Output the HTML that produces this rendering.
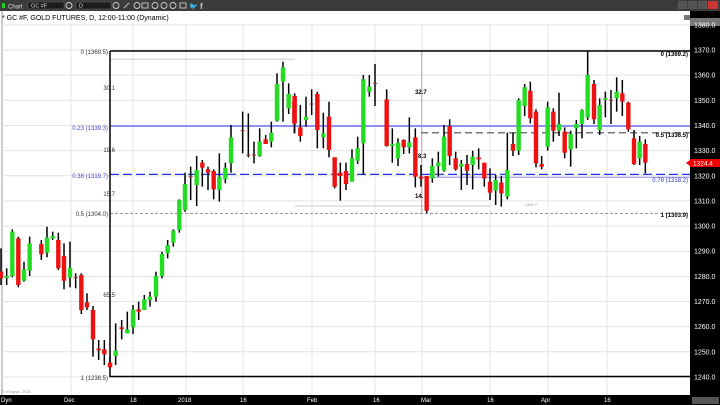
<!DOCTYPE html>
<html><head><meta charset="utf-8">
<style>
html,body{margin:0;padding:0;width:720px;height:405px;overflow:hidden;background:#fff;font-family:"Liberation Sans",sans-serif;}
#tb{position:absolute;left:0;top:0;width:720px;height:11px;background:#3a3a3a;}
svg{position:absolute;left:0;top:0;}
</style></head><body>
<svg id="s" width="720" height="405" viewBox="0 0 720 405" font-family="Liberation Sans, sans-serif">
<rect x="0" y="0" width="720" height="11" fill="#3b3b3b"/>
<rect x="2" y="3" width="3" height="5" fill="#2c2"/>
<text x="8" y="8.5" font-size="6" fill="#ddd">Chart</text>
<rect x="28" y="2" width="36" height="7" fill="#1c1c1c" stroke="#666" stroke-width="0.5"/>
<text x="31" y="7.5" font-size="5.5" fill="#ddd">GC #F</text>
<circle cx="69" cy="5.5" r="3" fill="none" stroke="#ccc"/>
<rect x="76" y="2" width="35" height="7" fill="#1c1c1c" stroke="#666" stroke-width="0.5"/>
<text x="79" y="7.5" font-size="5.5" fill="#ddd">D</text>
<g fill="none" stroke="#ccc" stroke-width="0.9">
<circle cx="116" cy="5.5" r="3"/><path d="M124 8 L129 3"/><circle cx="137" cy="5.5" r="3"/><rect x="142" y="3" width="6" height="5"/><circle cx="155" cy="5.5" r="3"/><circle cx="164" cy="5.5" r="3"/><circle cx="173" cy="5.5" r="3"/><rect x="180" y="3" width="6" height="5"/></g>
<text x="189" y="8.5" font-size="7" fill="#ccc">🐦</text><text x="200" y="9" font-size="8" font-weight="bold" fill="#ccc">f</text>
<rect x="678" y="1" width="9" height="8" fill="#555"/><rect x="688" y="1" width="9" height="8" fill="#555"/><rect x="698" y="1" width="9" height="8" fill="#555"/><rect x="708" y="1" width="10" height="8" fill="#c33"/>
<text x="2" y="20" font-size="7" fill="#000">* GC #F, GOLD FUTURES, D, 12:00-11:00 (Dynamic)</text>
<rect x="690" y="11" width="30" height="394" fill="#000"/>
<rect x="690" y="18" width="30" height="8" fill="#777"/>
<rect x="684" y="15" width="6" height="5" fill="#777"/>
<line x1="2" y1="11" x2="2" y2="395" stroke="#999"/>
<g id="grid" stroke="#e4e4e4" stroke-width="1"></g>
<g id="fib"></g>
<g id="c"></g>
<rect x="0" y="395" width="720" height="10" fill="#000"/>
<g font-size="6" fill="#fff">
<text x="1" y="402">Dyn</text><text x="64" y="402">Dec</text><text x="130" y="402">18</text><text x="178" y="402">2018</text><text x="240" y="402">16</text><text x="307" y="402">Feb</text><text x="373" y="402">16</text><text x="421" y="402">Mar</text><text x="487" y="402">16</text><text x="541" y="402">Apr</text><text x="604" y="402">16</text></g>
<rect x="692" y="397" width="27" height="7" fill="#555"/>
<text x="2" y="393" font-size="4" fill="#999">© eSignal, 2018</text>
</svg>
<script>
var s=document.getElementById('s'),NS='http://www.w3.org/2000/svg';
function el(p,t,a,txt){var e=document.createElementNS(NS,t);for(var k in a)e.setAttribute(k,a[k]);if(txt)e.textContent=txt;document.getElementById(p)?document.getElementById(p).appendChild(e):s.appendChild(e);return e;}
function Y(p){return 50+(1370-p)*2.515;}
// grid
[71,133,186,243,312,375,422,490,548,607].forEach(function(x){el('grid','line',{x1:x,y1:24,x2:x,y2:395});});
for(var p=1380;p>=1230;p-=10){var y=Y(p);el('grid','line',{x1:2,y1:y,x2:690,y2:y});
 el('fib','text',{x:694,y:y+2.5,'font-size':7,fill:'#fff'},p.toFixed(1));}
// fib lines
el('fib','line',{x1:110,y1:59.3,x2:295,y2:59.3,stroke:'#ccc'});
el('fib','line',{x1:295,y1:206,x2:490,y2:206,stroke:'#ccc'});
el('fib','line',{x1:421.7,y1:51,x2:421.7,y2:213,stroke:'#aaa'});
el('fib','line',{x1:110,y1:126,x2:690,y2:126,stroke:'#8f8ff5','stroke-width':2});
el('fib','line',{x1:110,y1:174.4,x2:690,y2:174.4,stroke:'#2233ee','stroke-width':1.3,'stroke-dasharray':'9,4'});
el('fib','line',{x1:421,y1:177.3,x2:690,y2:177.3,stroke:'#8f8ff5','stroke-width':1});
el('fib','line',{x1:110,y1:213.4,x2:690,y2:213.4,stroke:'#777','stroke-width':0.8,'stroke-dasharray':'3,2'});
el('fib','line',{x1:421,y1:132.7,x2:690,y2:132.7,stroke:'#777','stroke-width':1.5,'stroke-dasharray':'7,4'});
el('fib','path',{d:'M110 51 H690 M110 51 V376.5 H690',stroke:'#000','stroke-width':1.5,fill:'none'});
var L=[[108,54,'0 (1369.5)','#333','end'],[115,90,'30.1','#333','end'],[108,130,'0.23 (1339.3)','#44c','end'],[115,152,'19.6','#333','end'],[108,178,'0.38 (1319.7)','#44c','end'],[115,196,'15.7','#333','end'],[108,216,'0.5 (1304.0)','#333','end'],[115,297,'65.5','#333','end'],[108,380,'1 (1238.5)','#333','end'],
[415,94,'32.7','#000','start'],[418,158,'8.3','#000','start'],[415,198,'14.','#000','start'],[688,56,'0 (1369.2)','#000','end'],[688,137,'0.5 (1336.5)','#000','end'],[688,182,'0.78 (1318.2)','#33c','end'],[688,217,'1 (1303.9)','#000','end'],[537,206,'1306.7','#999','end']];
L.forEach(function(l){el('fib','text',{x:l[0],y:l[1],'font-size':l[2]=='1306.7'?4:6,fill:l[3],'text-anchor':l[4],'font-weight':l[3]=='#000'?'bold':'normal'},l[2]);});
// candles: [zx, type, bt, bb, wt, wb] in zoom coords
var z4=[[3,'r',695,715,625,735],[20,'g',708,714,685,735],[37,'g',575,708,568,712],[55,'r',595,735,590,742],[72,'g',688,722,665,725],[89,'g',610,692,590,708],[124,'r',612,643,600,660],[141,'g',593,638,560,652],[158,'g',588,595,575,600],[175,'r',600,685,578,690],[192,'r',648,722,610,748],[210,'g',683,713,605,742],[227,'d',713,714,700,745],[244,'r',705,810,700,822],[261,'r',787,802,760,810],[279,'r',810,898,798,950],[296,'r',926,931,900,960],[313,'r',928,943,900,975],[330,'r',968,982,950,985],[347,'g',932,948,850,975],[365,'r',862,867,840,898],[382,'g',868,880,815,880],[399,'g',808,862,795,882],[416,'r',808,815,785,840],[433,'g',778,810,765,805],[450,'g',770,780,755,800],[468,'g',708,770,695,785],[486,'g',642,708,635,715],[503,'g',615,640,600,655],[520,'g',572,608,568,620],[538,'g',480,570,478,578],[555,'g',432,510,398,515],[572,'d',410,411,380,480],[590,'g',390,435,348,498],[607,'r',368,383,360,440],[624,'r',388,398,380,450],[641,'r',393,448,388,478],[658,'g',410,450,340,485],[676,'g',383,418,368,430],[693,'g',292,370,255,398],[728,'d',272,273,215,340],[745,'d',345,346,220,352],[762,'d',345,346,305,370],[779,'g',305,348,265,350],[797,'r',298,312,285,312],[814,'g',278,305,245,322],[831,'g',132,242,100,245],[849,'g',82,125,65,245],[866,'g',162,205,130,222],[883,'r',185,250,185,280]];
var z5=[[14,'r',168,250,160,280],[31,'r',262,288,195,305],[48,'g',230,240,170,260],[65,'d',192,193,148,225],[82,'r',162,270,155,325],[100,'g',280,292,218,325],[117,'r',230,330,185,352],[134,'r',352,440,352,445],[151,'r',398,408,368,482],[168,'r',393,432,368,450],[186,'g',355,425,328,425],[203,'g',325,362,290,372],[220,'g',118,310,105,405],[238,'g',140,155,105,170],[255,'d',130,131,72,198],[290,'r',178,318,148,320],[307,'g',313,318,265,368],[324,'g',308,355,295,378],[341,'r',300,322,298,342],[358,'g',307,322,232,340],[376,'r',292,410,265,442],[393,'r',410,416,375,440],[410,'r',408,512,408,520],[427,'g',378,415,355,428],[445,'g',368,378,335,410],[462,'g',290,392,255,395],[479,'r',258,348,238,375],[497,'r',355,388,335,392],[514,'g',372,380,360,450],[531,'r',372,392,345,435],[548,'g',350,375,332,448],[566,'r',352,358,325,388],[583,'r',368,415,368,440],[600,'r',425,458,385,480],[617,'g',420,452,405,495],[634,'r',428,460,408,500],[652,'g',390,470,278,478],[669,'r',312,332,278,348],[686,'g',180,332,175,345],[704,'g',142,198,132,228],[721,'r',152,235,125,250],[738,'r',215,370,208,382],[755,'r',372,380,348,388],[773,'g',202,320,185,332],[790,'r',215,272,205,305],[807,'g',252,272,158,288],[824,'r',275,338,262,355],[842,'g',282,328,272,380],[859,'g',252,265,240,325],[876,'g',210,252,208,295],[893,'g',105,232,35,240]];
var z2=[[102,'r',162,268,150,282],[119,'g',225,300,205,315],[136,'g',205,210,185,262],[153,'d',211,212,180,282],[170,'g',185,205,142,245],[187,'r',190,215,150,258],[205,'r',218,298,215,305],[222,'r',325,402,300,405],[239,'g',335,385,318,405],[256,'r',342,398,328,430]];
function draw(arr,ox,oy){arr.forEach(function(c){var x=ox+c[0]/3,bt=oy+c[2]/3,bb=oy+c[3]/3,wt=oy+c[4]/3,wb=oy+c[5]/3;
 el('c','line',{x1:x,y1:wt,x2:x,y2:wb,stroke:'#000','stroke-width':1.5});
 if(c[1]=='d'){el('c','line',{x1:x-2,y1:bt,x2:x+2,y2:bt,stroke:'#a33','stroke-width':1});return;}
 el('c','rect',{x:x-2.2,y:bt,width:4.4,height:Math.max(1.5,bb-bt),fill:c[1]=='g'?'#22dd22':'#ee1111'});});}
draw(z4,0,40);draw(z5,290,40);draw(z2,560,30);
el('c','rect',{x:690,y:159,width:30,height:8,fill:'#e00'});
el('c','path',{d:'M686 163 L690 160 V166 Z',fill:'#e00'});
el('c','text',{x:693,y:165.5,'font-size':6.5,fill:'#fff'},'1324.4');
</script>
</body></html>
